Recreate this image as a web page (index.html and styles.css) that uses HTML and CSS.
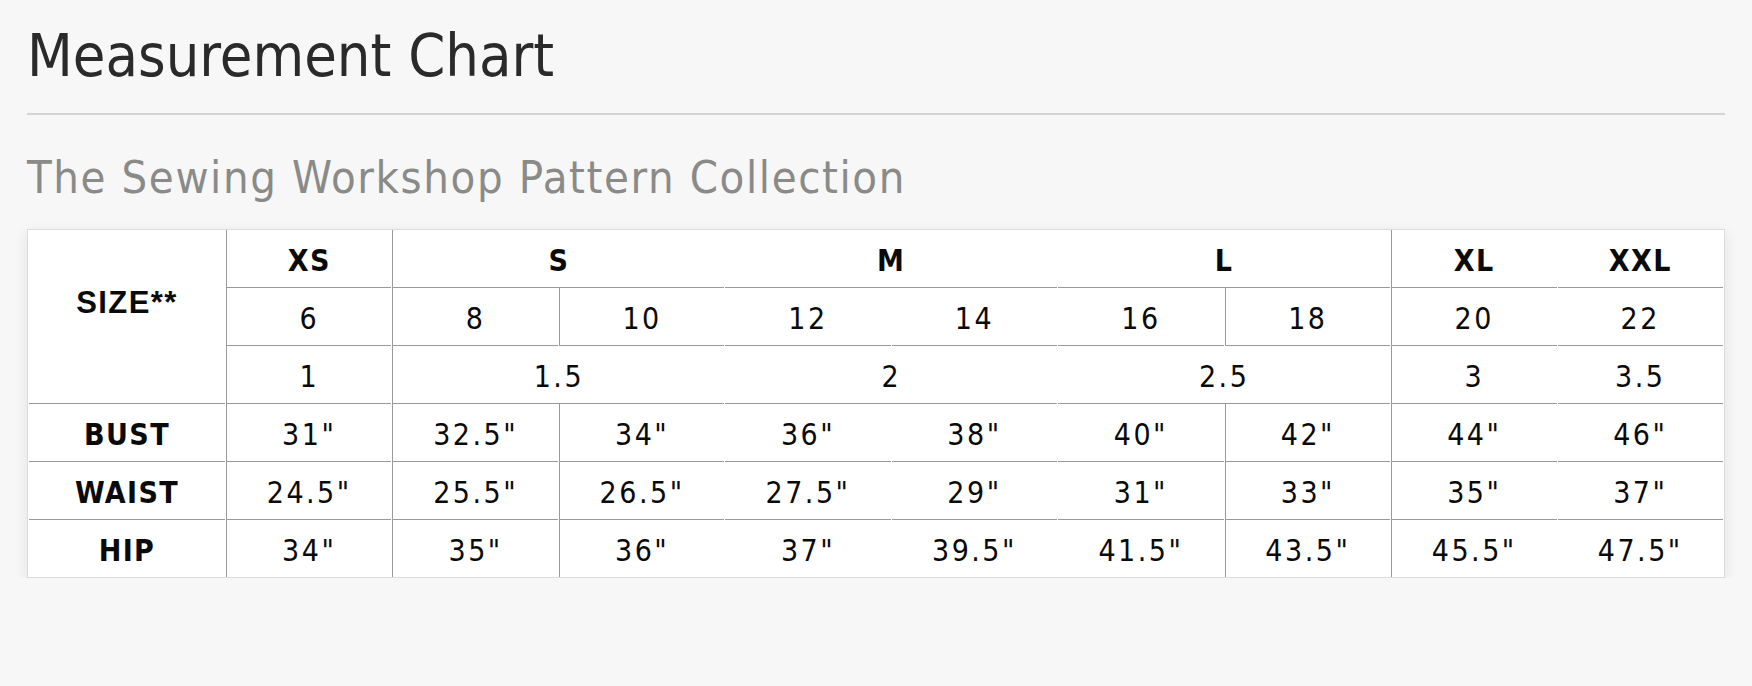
FILE: index.html
```html
<!DOCTYPE html>
<html>
<head>
<meta charset="utf-8">
<link rel="stylesheet" href="styles.css">
</head>
<body>
<div class="page">
  <h1 class="title">Measurement Chart</h1>
  <hr class="rule">
  <h2 class="subtitle">The Sewing Workshop Pattern Collection</h2>
  <table class="chart">
    <colgroup>
      <col class="c-label">
      <col><col><col><col><col><col><col><col><col>
    </colgroup>
    <tr>
      <th class="label size" rowspan="3">SIZE**</th>
      <th class="vl">XS</th>
      <th class="vl" colspan="2">S</th>
      <th colspan="2">M</th>
      <th colspan="2">L</th>
      <th class="vl">XL</th>
      <th>XXL</th>
    </tr>
    <tr>
      <td class="vl">6</td>
      <td class="vl">8</td>
      <td class="vl">10</td>
      <td>12</td>
      <td>14</td>
      <td>16</td>
      <td class="vl">18</td>
      <td class="vl">20</td>
      <td>22</td>
    </tr>
    <tr>
      <td class="vl">1</td>
      <td class="vl" colspan="2">1.5</td>
      <td colspan="2">2</td>
      <td colspan="2">2.5</td>
      <td class="vl">3</td>
      <td>3.5</td>
    </tr>
    <tr>
      <th class="label">BUST</th>
      <td class="vl">31"</td>
      <td class="vl">32.5"</td>
      <td class="vl">34"</td>
      <td>36"</td>
      <td>38"</td>
      <td>40"</td>
      <td class="vl">42"</td>
      <td class="vl">44"</td>
      <td>46"</td>
    </tr>
    <tr>
      <th class="label">WAIST</th>
      <td class="vl">24.5"</td>
      <td class="vl">25.5"</td>
      <td class="vl">26.5"</td>
      <td>27.5"</td>
      <td>29"</td>
      <td>31"</td>
      <td class="vl">33"</td>
      <td class="vl">35"</td>
      <td>37"</td>
    </tr>
    <tr class="last">
      <th class="label">HIP</th>
      <td class="vl">34"</td>
      <td class="vl">35"</td>
      <td class="vl">36"</td>
      <td>37"</td>
      <td>39.5"</td>
      <td>41.5"</td>
      <td class="vl">43.5"</td>
      <td class="vl">45.5"</td>
      <td>47.5"</td>
    </tr>
  </table>
</div>
</body>
</html>
```

FILE: styles.css
```css
html, body {
  margin: 0;
  padding: 0;
  background: #f7f7f7;
}

.page {
  padding: 20px 27px 0 27px;
  font-family: "DejaVu Sans", "Lucida Grande", sans-serif;
  font-stretch: condensed;
}

.title {
  margin: 0;
  font-size: 59px;
  font-weight: normal;
  color: #2a2a2a;
  line-height: 72px;
}

.rule {
  margin: 21px 0 0 0;
  border: none;
  height: 2px;
  background: #d4d4d4;
}

.subtitle {
  margin: 37px 0 0 0;
  font-size: 45px;
  font-weight: normal;
  color: #8a8a88;
  letter-spacing: 1.6px;
  line-height: 52px;
}

.chart {
  margin-top: 25px;
  width: 100%;
  table-layout: fixed;
  border-collapse: separate;
  border-spacing: 1px 0;
  background: #fff;
  border: 1px solid #dcdcdc;
  box-shadow: 0 4px 14px rgba(0, 0, 0, 0.09);
}

.c-label {
  width: 196px;
}

.chart th,
.chart td {
  height: 54px;
  padding: 3px 0 0 0;
  text-align: center;
  vertical-align: middle;
  border-bottom: 1px solid #9a9a9a;
  color: #0a0a0a;
  font-size: 30px;
  letter-spacing: 2.5px;
}

.chart td {
  font-weight: normal;
}

.chart th {
  font-weight: bold;
  letter-spacing: 1.4px;
}

.chart tr.last th,
.chart tr.last td {
  border-bottom: none;
}

.chart .vl {
  border-left: 1px solid #9a9a9a;
}

.chart th.size {
  font-family: "Liberation Sans", Arial, sans-serif;
  font-stretch: normal;
  font-size: 31px;
  vertical-align: top;
  padding-top: 55px;
  letter-spacing: 1.4px;
}
```
